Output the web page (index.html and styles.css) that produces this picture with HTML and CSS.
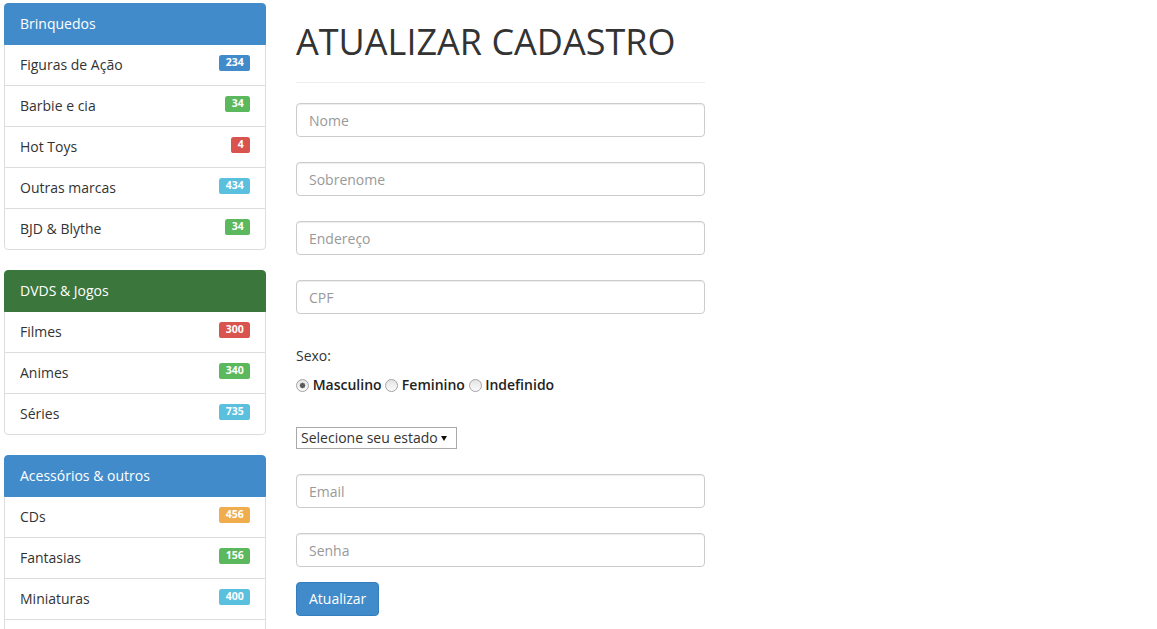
FILE: index.html
```html
<!DOCTYPE html>
<html lang="pt-BR">
<head>
<meta charset="utf-8">
<title>Atualizar Cadastro</title>
<link rel="stylesheet" href="styles.css">
</head>
<body>
<div class="page">
  <aside class="sidebar">
    <div class="list-group">
      <div class="list-item head head-blue">Brinquedos</div>
      <a class="list-item" href="#">Figuras de Ação <span class="label label-primary">234</span></a>
      <a class="list-item" href="#">Barbie e cia <span class="label label-success">34</span></a>
      <a class="list-item" href="#">Hot Toys <span class="label label-danger">4</span></a>
      <a class="list-item" href="#">Outras marcas <span class="label label-info">434</span></a>
      <a class="list-item" href="#">BJD &amp; Blythe <span class="label label-success">34</span></a>
    </div>
    <div class="list-group">
      <div class="list-item head head-green">DVDS &amp; Jogos</div>
      <a class="list-item" href="#">Filmes <span class="label label-danger">300</span></a>
      <a class="list-item" href="#">Animes <span class="label label-success">340</span></a>
      <a class="list-item" href="#">Séries <span class="label label-info">735</span></a>
    </div>
    <div class="list-group">
      <div class="list-item head head-blue">Acessórios &amp; outros</div>
      <a class="list-item" href="#">CDs <span class="label label-warning">456</span></a>
      <a class="list-item" href="#">Fantasias <span class="label label-success">156</span></a>
      <a class="list-item" href="#">Miniaturas <span class="label label-info">400</span></a>
      <a class="list-item list-item-empty" href="#" aria-label="Mais"></a>
    </div>
  </aside>

  <main class="main">
    <h1 class="title">ATUALIZAR CADASTRO</h1>
    <hr class="divider">
    <form class="form" action="#">
      <input class="form-control" type="text" placeholder="Nome">
      <input class="form-control" type="text" placeholder="Sobrenome">
      <input class="form-control" type="text" placeholder="Endereço">
      <input class="form-control" type="text" placeholder="CPF">
      <div class="gender">
        <div class="gender-label">Sexo:</div>
        <div class="gender-options">
          <label class="radio"><input type="radio" name="sexo" checked> Masculino</label>
          <label class="radio"><input type="radio" name="sexo"> Feminino</label>
          <label class="radio"><input type="radio" name="sexo"> Indefinido</label>
        </div>
      </div>
      <div class="select-wrap">
        <select class="state">
          <option>Selecione seu estado</option>
        </select>
      </div>
      <input class="form-control" type="email" placeholder="Email">
      <input class="form-control last" type="password" placeholder="Senha">
      <button class="btn" type="submit">Atualizar</button>
    </form>
  </main>
</div>
</body>
</html>
```

FILE: styles.css
```css
* { box-sizing: border-box; }

html { overflow: hidden; }

body {
  margin: 0;
  font-family: "Open Sans", "Liberation Sans", sans-serif;
  font-size: 14px;
  line-height: 20px;
  color: #333;
  background: #fff;
}

.page {
  display: flex;
  align-items: flex-start;
  gap: 30px;
  padding: 3px 0 0 4px;
}

/* Sidebar */
.sidebar {
  width: 262px;
  flex: none;
}

.list-group {
  display: flex;
  flex-direction: column;
  margin-bottom: 20px;
}

.list-item {
  position: relative;
  display: flex;
  justify-content: space-between;
  align-items: flex-start;
  padding: 10px 15px;
  border: 1px solid #ddd;
  margin-bottom: -1px;
  background: #fff;
  color: #333;
  text-decoration: none;
}

.list-item-empty {
  min-height: 42px;
}

.list-item:first-child {
  border-top-left-radius: 4px;
  border-top-right-radius: 4px;
}

.list-item:last-child {
  margin-bottom: 0;
  border-bottom-left-radius: 4px;
  border-bottom-right-radius: 4px;
}

.head {
  z-index: 2;
  color: #fff;
}

.head-blue { background: #428bca; border-color: #428bca; }
.head-green { background: #3b763d; border-color: #3b763d; }

.label {
  display: inline-block;
  padding: .2em .6em .3em;
  font-size: 10.5px;
  font-weight: 700;
  line-height: 1;
  color: #fff;
  text-align: center;
  white-space: nowrap;
  border-radius: .25em;
}

.label-primary { background: #428bca; }
.label-success { background: #5cb85c; }
.label-danger { background: #d9534f; }
.label-info { background: #5bc0de; }
.label-warning { background: #f0ad4e; }

/* Main */
.main {
  width: 409px;
  flex: none;
}

.title {
  margin: 19px 0 10px;
  font-size: 36px;
  line-height: 40px;
  font-weight: 400;
  color: #333;
}

.divider {
  margin: 20px 0;
  border: 0;
  border-top: 1px solid #eee;
}

.form {
  display: block;
}

.form-control {
  display: block;
  width: 100%;
  height: 34px;
  margin: 0 0 25px;
  padding: 6px 12px;
  font-family: inherit;
  font-size: 14px;
  line-height: 20px;
  color: #555;
  background: #fff;
  border: 1px solid #ccc;
  border-radius: 4px;
  box-shadow: inset 0 1px 1px rgba(0, 0, 0, .075);
}

.form-control.last { margin-bottom: 15px; }

.form-control::placeholder { color: #999; }

.gender {
  margin-top: 32px;
}

.gender-options {
  margin-top: 9px;
}

.radio {
  font-weight: 600;
  color: #222;
}

.radio input {
  -webkit-appearance: none;
  appearance: none;
  width: 13px;
  height: 13px;
  margin: 0;
  vertical-align: -2px;
  border: 1px solid #a3a3a3;
  border-radius: 50%;
  background: linear-gradient(#e4e4e4, #fbfbfb);
}

.radio input:checked {
  background: radial-gradient(circle, #5a5a5a 0 2px, #8a8a8a 2.6px, transparent 3.2px), linear-gradient(#e4e4e4, #fbfbfb);
}

.select-wrap {
  position: relative;
  width: 161px;
  margin: 32px 0 25px;
}

.select-wrap::after {
  content: "";
  position: absolute;
  right: 10px;
  top: 9px;
  border-left: 3px solid transparent;
  border-right: 3px solid transparent;
  border-top: 5px solid #111;
  pointer-events: none;
}

.state {
  -webkit-appearance: none;
  appearance: none;
  display: block;
  width: 161px;
  height: 22px;
  padding: 0 18px 0 4px;
  font-family: inherit;
  font-size: 14px;
  line-height: 20px;
  color: #333;
  background: #fff;
  border: 1px solid #a9a9a9;
  border-radius: 0;
}

.btn {
  display: inline-block;
  padding: 6px 12px;
  font-family: inherit;
  font-size: 14px;
  line-height: 20px;
  color: #fff;
  background: #428bca;
  border: 1px solid #357ebd;
  border-radius: 4px;
  cursor: pointer;
}
```
